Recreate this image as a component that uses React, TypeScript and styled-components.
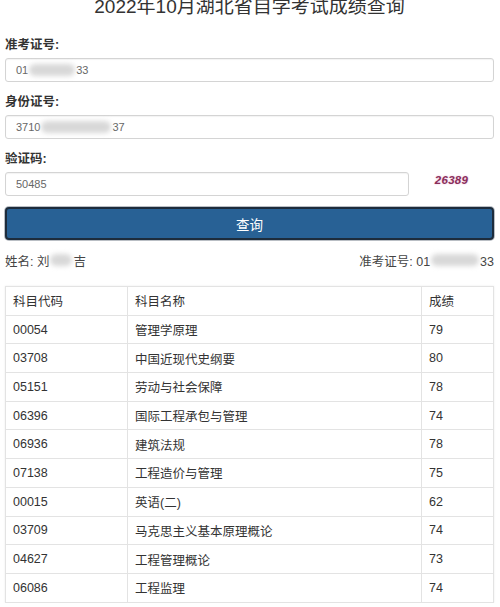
import * as React from "react";
import styled, {createGlobalStyle} from "styled-components";

const GlobalStyle = createGlobalStyle`
    body {
        margin: 0;
        background: #fff;
        font-family: "Liberation Sans", "Noto Sans CJK SC", sans-serif;
        color: #333;
        overflow: hidden;
    }
`;

const rows: [string, string, string][] = [
    ["00054", "管理学原理", "79"],
    ["03708", "中国近现代史纲要", "80"],
    ["05151", "劳动与社会保障", "78"],
    ["06396", "国际工程承包与管理", "74"],
    ["06936", "建筑法规", "78"],
    ["07138", "工程造价与管理", "75"],
    ["00015", "英语(二)", "62"],
    ["03709", "马克思主义基本原理概论", "74"],
    ["04627", "工程管理概论", "73"],
    ["06086", "工程监理", "74"],
];

const Page = styled.div`
    padding: 0 6px 0 5px;
    width: 500px;
    box-sizing: border-box;
`;

const Title = styled.h1`
    margin: -7px 0 15px;
    font-size: 19px;
    line-height: 28px;
    font-weight: normal;
    text-align: center;
    color: #333;
`;

const Group = styled.div`
    margin-bottom: 11px;
`;

const Label = styled.div`
    font-size: 12.5px;
    font-weight: bold;
    line-height: 18px;
    margin-bottom: 4px;
    color: #333;
`;

const Row = styled.div`
    display: flex;
    align-items: center;
`;

const Field = styled.div<{ $w?: number }>`
    box-sizing: border-box;
    height: 24px;
    width: ${p => (p.$w ? p.$w + "px" : "100%")};
    border: 1px solid #d4d4d4;
    border-radius: 3px;
    box-shadow: inset 0 1px 1px rgba(0, 0, 0, 0.05);
    padding-left: 10px;
    display: flex;
    align-items: center;
    font-size: 11px;
    color: #666;
`;

const Blur = styled.span<{ $w: number }>`
    display: inline-block;
    width: ${p => p.$w}px;
    height: 12px;
    background: #d8d8d8;
    border-radius: 6px;
    filter: blur(2.5px);
    margin: 0 1px;
`;

const Captcha = styled.div`
    flex: 1;
    text-align: center;
    font-size: 11.5px;
    font-weight: bold;
    font-style: italic;
    color: #8a2e5a;
    letter-spacing: 0.3px;
    text-shadow: 0 0 2px #e7b4d2;
    padding-bottom: 8px;
`;

const Button = styled.button`
    display: block;
    width: 100%;
    height: 33px;
    margin-top: 1px;
    background: #286195;
    border: 2px solid #1d2c3c;
    border-radius: 4px;
    box-shadow: 0 0 0 1px #b9bec4;
    color: #fff;
    font-family: inherit;
    font-size: 13.5px;
`;

const Info = styled.div`
    display: flex;
    justify-content: space-between;
    align-items: center;
    margin: 12px 0 14px;
    line-height: 20px;
    font-size: 12.5px;
    color: #444;
`;

const Table = styled.table`
    width: 100%;
    border-collapse: collapse;
    border: 1px solid #e3e3e3;
    box-shadow: 0 0 2px rgba(0, 0, 0, 0.08);
    font-size: 12.5px;
    color: #333;
    table-layout: fixed;
`;

const Cell = styled.td<{ $w?: number }>`
    height: 27.7px;
    padding: 0 0 0 7px;
    border: 1px solid #e3e3e3;
    vertical-align: middle;
    ${p => (p.$w ? `width: ${p.$w}px;` : "")}
`;

export default function App() {
    return <Page>
        <GlobalStyle/>
        <Title>2022年10月湖北省自学考试成绩查询</Title>
        <Group>
            <Label>准考证号:</Label>
            <Field>01<Blur $w={46}/>33</Field>
        </Group>
        <Group>
            <Label>身份证号:</Label>
            <Field>3710<Blur $w={70}/>37</Field>
        </Group>
        <Group>
            <Label>验证码:</Label>
            <Row>
                <Field $w={404}>50485</Field>
                <Captcha>26389</Captcha>
            </Row>
        </Group>
        <Button>查询</Button>
        <Info>
            <span>姓名:&nbsp;刘<Blur $w={22}/>吉</span>
            <span>准考证号:&nbsp;01<Blur $w={48}/>33</span>
        </Info>
        <Table>
            <tbody>
            <tr>
                <Cell $w={114}>科目代码</Cell>
                <Cell $w={286}>科目名称</Cell>
                <Cell>成绩</Cell>
            </tr>
            {rows.map(r => <tr key={r[0]}>
                <Cell>{r[0]}</Cell>
                <Cell>{r[1]}</Cell>
                <Cell>{r[2]}</Cell>
            </tr>)}
            </tbody>
        </Table>
    </Page>;
}
